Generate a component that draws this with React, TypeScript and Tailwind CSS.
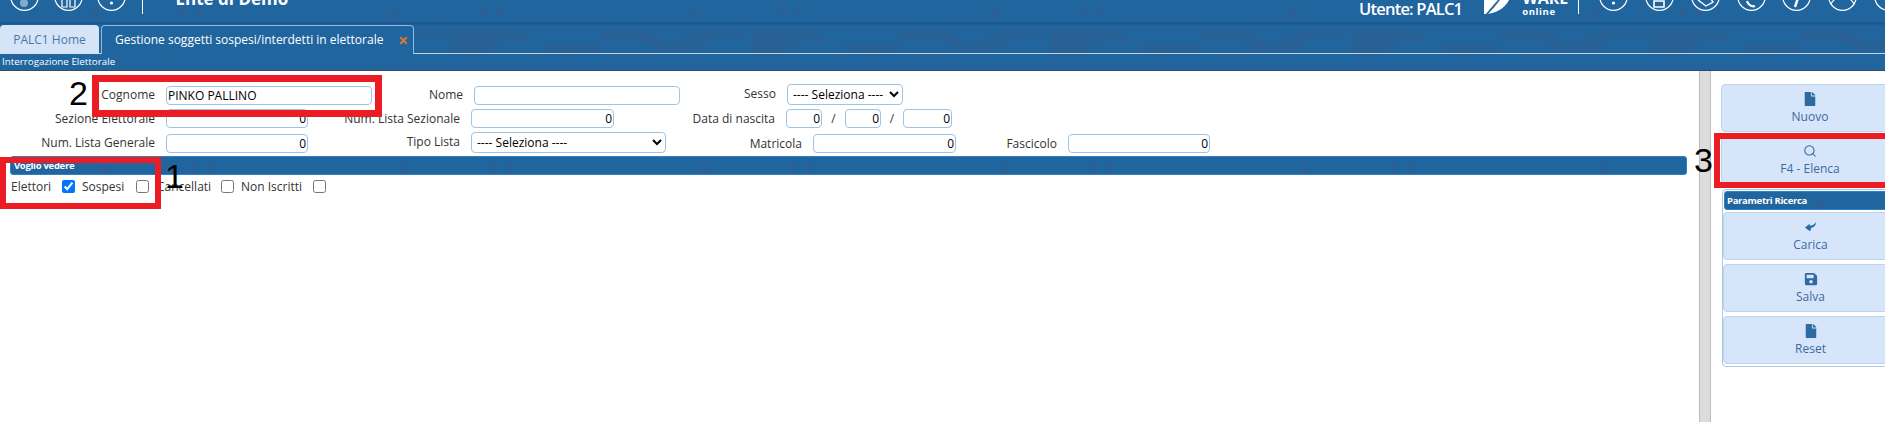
import React from 'react';
import { FaFile, FaSave, FaTimes } from 'react-icons/fa';
import { Search } from 'lucide-react';

// --- Background texture of the blue bands ---
const Skyline: React.FC<{ id: string }> = ({ id }) => (
  <svg className="absolute inset-0 w-full h-full" aria-hidden="true">
    <defs>
      <pattern id={id} width="300" height="70" patternUnits="userSpaceOnUse">
        <path d="M0 30h46l24 14 30-14h44v8h-30l-16 12h-40l-14-8H0z" fill="#2b5f92" opacity="0.7" />
        <path d="M150 28h60l28 16h62v10h-50l-14-12h-34l-22 14h-30z" fill="#2b5f92" opacity="0.65" />
        <path d="M20 50h6v8h-6zM36 50h6v8h-6zM52 50h6v8h-6zM180 6h6v10h-6zM196 6h6v10h-6zM240 52h8v10h-8zM262 52h8v10h-8zM90 8h8v12h-8z" fill="#2b5f92" opacity="0.8" />
      </pattern>
    </defs>
    <rect width="100%" height="100%" fill={`url(#${id})`} />
  </svg>
);

// --- Round header icon, only the lower part shows ---
const RoundIcon: React.FC<{ children?: React.ReactNode }> = ({ children }) => (
  <svg width="29" height="29" viewBox="0 0 29 29" className="-mt-[18px] shrink-0" fill="none">
    <circle cx="14.5" cy="14.5" r="13.8" stroke="#fff" strokeWidth="1.2" />
    {children}
  </svg>
);

const Label: React.FC<{ w: string; className?: string; children: React.ReactNode }> = ({ w, className, children }) => (
  <span className={`${w} ${className ?? ''} shrink-0 mr-[11px] text-right self-center leading-none whitespace-nowrap text-[#333]`}>{children}</span>
);

const inputCls = 'h-[19px] shrink-0 bg-white border border-[#9cc4e4] rounded-[4px] px-[1px] text-[12px] text-black outline-none';
const selectCls = 'h-[21px] shrink-0 bg-white border border-[#9cc4e4] rounded-[4px] text-[12px] text-black outline-none pl-[1px]';

const NumInput: React.FC<{ w: string }> = ({ w }) => (
  <input readOnly defaultValue="0" className={`${inputCls} ${w} text-right`} />
);

// --- Right side action button ---
const ActionButton: React.FC<{ icon: React.ReactNode; label: string }> = ({ icon, label }) => (
  <div className="h-[48px] shrink-0 flex flex-col items-center pt-[6px] bg-[#d7e5fb] border border-[#bcd3ec] rounded-[4px] text-[#3d6a9b] text-[12px] leading-[18px]">
    <span className="h-[15px] flex items-center text-[#2c6aa0]">{icon}</span>
    <span className="mt-[2px]">{label}</span>
  </div>
);

const CheckItem: React.FC<{ label: string; w: string; checked?: boolean }> = ({ label, w, checked }) => (
  <>
    <span className={`${w} shrink-0 whitespace-nowrap text-[#333]`}>{label}</span>
    <input type="checkbox" readOnly checked={!!checked} className="w-[13px] h-[13px] m-0 shrink-0" />
  </>
);

const App: React.FC = () => {
  return (
    <div className="relative w-[1885px] h-[422px] overflow-hidden bg-white text-[12px] font-['Open_Sans',sans-serif]">
      {/* blue top: header and tabs */}
      <div className="relative h-[55px] bg-[#21659f] overflow-hidden">
        <Skyline id="top" />
        <div className="relative w-[1903px] h-[23px] flex justify-between border-b border-[#1c5a90] shadow-[0_1px_2px_rgba(20,50,90,0.45)] overflow-hidden">
          <div className="flex pl-[10px] gap-[14.5px]">
            <RoundIcon><circle cx="14" cy="21" r="4" fill="#fff" opacity="0.45" /></RoundIcon>
            <RoundIcon><path d="M8 18v7h5v-7M16 18v7h5v-7" stroke="#fff" strokeWidth="1.2" /></RoundIcon>
            <RoundIcon><circle cx="14.5" cy="21" r="1.6" fill="#fff" /></RoundIcon>
            <div className="w-px h-[14px] ml-[1.5px] bg-white shrink-0" />
            <div className="ml-[18px] -mt-[10px] text-[17px] leading-[17px] font-bold text-white whitespace-nowrap">Ente di Demo</div>
          </div>
          <div className="flex">
            <span className="text-[16.5px] font-semibold leading-[17px] tracking-[-0.8px] text-white whitespace-nowrap">Utente: PALC1</span>
            <svg width="26" height="14" viewBox="0 0 26 14" className="ml-[22px] shrink-0">
              <path d="M0 0h3C5 0 20 0 25 0 21 8 12 14 0 14z" fill="#fff" />
              <path d="M2 14C6 9 10 4 14 0h2C12 5 8 10 4 14z" fill="#21659f" />
            </svg>
            <div className="ml-[12px] w-[46px] shrink-0 text-white font-bold">
              <div className="-mt-[9px] h-[15px] text-[16px] leading-[15px]">WARE</div>
              <div className="text-[9.5px] leading-[12px] tracking-[0.6px]">online</div>
            </div>
            <div className="w-px h-[14px] ml-[10px] bg-white shrink-0" />
            <div className="flex ml-[20px] gap-[16.8px]">
              <RoundIcon><circle cx="14.5" cy="21" r="1.6" fill="#fff" /></RoundIcon>
              <RoundIcon><path d="M9 19h10v6H9z" stroke="#fff" strokeWidth="1.6" /></RoundIcon>
              <RoundIcon><path d="M7 18l8 6 7-4-2-3" stroke="#fff" strokeWidth="1.4" /></RoundIcon>
              <RoundIcon><path d="M10 19c1 4 5 6 8 5" stroke="#fff" strokeWidth="2.2" /></RoundIcon>
              <RoundIcon><path d="M16 16l-3 9" stroke="#fff" strokeWidth="2.4" /></RoundIcon>
              <RoundIcon><path d="M3 22c3-6 7-7 11.500-7s9 2 11.500 7" stroke="#fff" strokeWidth="1.2" /></RoundIcon>
              <RoundIcon />
            </div>
          </div>
        </div>
        {/* tabs */}
        <div className="relative flex items-end h-[31px] border-b border-[#c9d3dc]">
          <div className="h-[29px] w-[99px] shrink-0 -mb-px flex items-center justify-center rounded-t-[4px] bg-[#d6e4f8] text-[#4a78a6] text-[12px]">PALC1 Home</div>
          <div className="h-[29px] w-[313px] ml-[2px] shrink-0 -mb-px flex items-center pl-[13px] rounded-t-[4px] border border-b-0 border-[#8dbbe4] bg-[#21659f] text-white text-[12px] whitespace-nowrap">
            Gestione soggetti sospesi/interdetti in elettorale
            <FaTimes size={11} className="ml-auto mr-[4px] text-[#e0762c]" />
          </div>
        </div>
      </div>
      {/* sub header */}
      <div className="relative h-[16px] bg-[#21659f] border-b border-[#3d4a55] pl-[2px] text-white text-[9.8px] leading-[14px] overflow-hidden">
        Interrogazione Elettorale
      </div>

      <div className="flex h-[351px]">
        {/* form */}
        <div className="w-[1699px] shrink-0">
          <div className="flex items-end h-[21px] mt-[13px]">
            <Label w="w-[155px]">Cognome</Label>
            <input readOnly defaultValue="PINKO PALLINO" className={`${inputCls} w-[206px]`} />
            <Label w="w-[91px]">Nome</Label>
            <input readOnly className={`${inputCls} w-[206px]`} />
            <Label w="w-[96px]" className="-translate-y-[1px]">Sesso</Label>
            <select className={`${selectCls} w-[116px]`}><option>---- Seleziona ----</option></select>
          </div>
          <div className="flex items-end h-[19px] mt-[4px]">
            <Label w="w-[155px]">Sezione Elettorale</Label>
            <NumInput w="w-[142px]" />
            <Label w="w-[152px]">Num. Lista Sezionale</Label>
            <NumInput w="w-[143px]" />
            <Label w="w-[161px]">Data di nascita</Label>
            <NumInput w="w-[36px]" />
            <span className="w-[23px] text-center text-[#333] self-center">/</span>
            <NumInput w="w-[36px]" />
            <span className="w-[22px] text-center text-[#333] self-center">/</span>
            <NumInput w="w-[49px]" />
          </div>
          <div className="flex items-end h-[21px] mt-[4px]">
            <Label w="w-[155px]">Num. Lista Generale</Label>
            <NumInput w="w-[142px]" />
            <Label w="w-[152px]" className="-translate-y-[1px]">Tipo Lista</Label>
            <select className={`${selectCls} w-[195px]`}><option>---- Seleziona ----</option></select>
            <Label w="w-[136px]" className="translate-y-[1px]">Matricola</Label>
            <NumInput w="w-[143px]" />
            <Label w="w-[101px]" className="translate-y-[1px]">Fascicolo</Label>
            <NumInput w="w-[142px]" />
          </div>
          <div className="relative mt-[3px] ml-[10px] w-[1677px] h-[19px] rounded-[3px] bg-[#21659f] border border-[#2f80c4] overflow-hidden">
            <Skyline id="bar" />
            <span className="relative block pl-[3px] text-white text-[9.5px] tracking-[-0.3px] font-bold leading-[17px]">Voglio vedere</span>
          </div>
          <div className="flex items-center h-[13px] mt-[5px] pl-[11px]">
            <CheckItem label="Elettori" w="w-[51px]" checked />
            <span className="w-[7px]" />
            <CheckItem label="Sospesi" w="w-[54px]" />
            <span className="w-[8px]" />
            <CheckItem label="Cancellati" w="w-[64px]" />
            <span className="w-[7px]" />
            <CheckItem label="Non Iscritti" w="w-[72px]" />
          </div>
        </div>

        {/* scrollbar */}
        <div className="w-[12px] shrink-0 bg-[#dcdcdc] border-x border-[#bdbdbd]" />

        {/* actions */}
        <div className="w-[188px] shrink-0 pl-[10px] pt-[13px] flex flex-col gap-[4px]">
          <ActionButton icon={<FaFile size={14} />} label="Nuovo" />
          <ActionButton icon={<Search size={14} strokeWidth={1.8} />} label="F4 - Elenca" />
          <div className="mt-[1px] ml-[1px] flex flex-col gap-[4px] h-[178px] border border-[#a9c9e6] rounded-[4px] pt-[1px]">
            <div className="relative h-[19px] -mb-[2px] ml-[1px] shrink-0 rounded-[3px] bg-[#21659f] border border-[#2f80c4] overflow-hidden">
              <Skyline id="params" />
              <span className="relative block pl-[2px] text-white text-[9.5px] tracking-[-0.3px] font-bold leading-[17px]">Parametri Ricerca</span>
            </div>
            <ActionButton
              icon={
                <svg width="11" height="11" viewBox="0 0 12 12" fill="currentColor">
                  <path d="M0 7 5 3v2C8 5 10.500 3.500 12 1c0 3.500-2 6-5.500 6.500L6 11 4.500 10.500z" />
                </svg>
              }
              label="Carica"
            />
            <ActionButton icon={<FaSave size={14} />} label="Salva" />
            <ActionButton icon={<FaFile size={14} />} label="Reset" />
          </div>
        </div>
      </div>

      {/* red annotations drawn over the screenshot */}
      <div className="absolute left-0 top-[157px] w-[161px] h-[52px] border-[6px] border-[#ec1c24]" />
      <div className="absolute left-[92px] top-[75px] w-[290px] h-[42px] border-[7px] border-[#ec1c24]" />
      <div className="absolute left-[1714px] top-[133px] w-[190px] h-[55px] border-[6px] border-[#ec1c24]" />
      <span className="absolute left-[69px] top-[71px] text-[34px] leading-[44px] text-black font-['Liberation_Sans',sans-serif]">2</span>
      <span className="absolute left-[165px] top-[154px] text-[34px] leading-[44px] text-black font-['Liberation_Sans',sans-serif]">1</span>
      <span className="absolute left-[1694px] top-[138px] text-[34px] leading-[44px] text-black font-['Liberation_Sans',sans-serif]">3</span>
    </div>
  );
};

export default App;
